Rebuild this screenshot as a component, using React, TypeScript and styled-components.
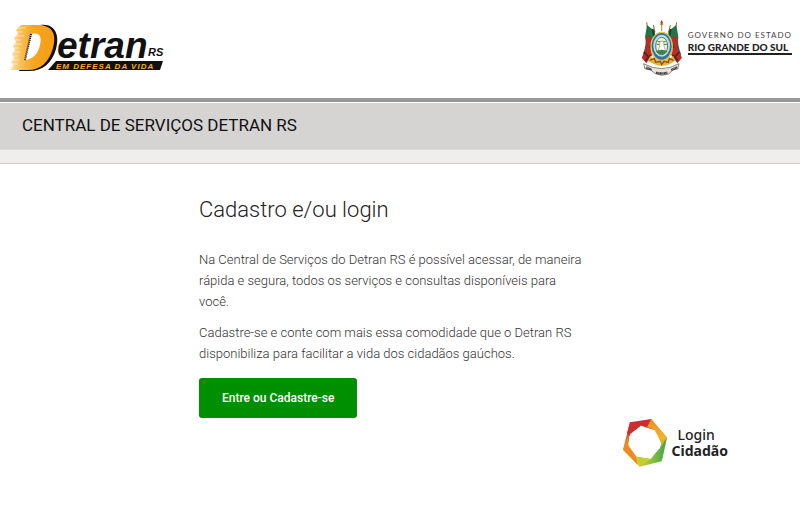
import React from "react";
import styled, { createGlobalStyle } from "styled-components";

const GlobalStyle = createGlobalStyle`
  *, *::before, *::after { box-sizing: border-box; }
  body {
    margin: 0;
    background: #fff;
    font-family: Roboto, "Liberation Sans", sans-serif;
  }
  h1, h2, p { margin: 0; }
`;

const Header = styled.header`
  display: flex;
  justify-content: space-between;
  align-items: flex-start;
  padding: 19px 8px 21px;
  border-bottom: 4px solid #999898;
`;

const HomeLink = styled.a`
  display: block;
  padding-top: 3px;
  text-decoration: none;
`;

const Drawing = styled.svg`
  display: block;
  overflow: visible;
`;

const State = styled.div`
  display: flex;
  gap: 4px;
`;

const StateName = styled.div`
  margin-top: 11px;
  align-self: flex-start;
  border-bottom: 2px solid #222;
  color: #222;
  font-family: Lato, sans-serif;
  white-space: nowrap;
`;

const StateTop = styled.div`
  font-size: 8px;
  line-height: 11px;
  letter-spacing: 1px;
  color: #444;
`;

const StateBottom = styled.div`
  font-size: 10px;
  line-height: 12px;
  font-weight: 900;
`;

const TitleBar = styled.div`
  margin-top: 1px;
  padding: 11px 22px 12px;
  background: #d5d4d2;
`;

const SiteTitle = styled.h1`
  font-size: 17px;
  line-height: 23px;
  font-weight: 400;
  color: #111;
`;

const Strip = styled.div`
  height: 15px;
  background: #efeeec;
  border-top: 1px solid #dddcda;
  border-bottom: 1px solid #d2d1cf;
`;

const Content = styled.main`
  max-width: 402px;
  margin: 0 auto;
  padding-top: 31px;
`;

const Heading = styled.h2`
  font-size: 22px;
  line-height: 30px;
  font-weight: 300;
  color: #222;
  margin-bottom: 24px;
`;

const Paragraph = styled.p`
  max-width: 386px;
  font-size: 13px;
  line-height: 21px;
  font-weight: 300;
  color: #333;
  margin-bottom: 10px;
`;

const EnterButton = styled.button`
  margin-top: 4px;
  padding: 0 23px;
  height: 40px;
  border: 0;
  border-radius: 3px;
  background: #008f00;
  color: #fff;
  font-family: inherit;
  font-size: 12px;
  font-weight: 500;
  cursor: pointer;
`;

const Footer = styled.footer`
  display: flex;
  justify-content: flex-end;
  padding: 0 72px 24px 0;
`;

const LoginBrand = styled.a`
  display: flex;
  align-items: center;
  gap: 4px;
  color: #222;
  text-decoration: none;
  font-family: "Noto Sans", sans-serif;
`;

const LoginWords = styled.span`
  display: grid;
  font-size: 14px;
  line-height: 16px;
  font-weight: 500;
`;

const FirstWord = styled.span`
  padding-left: 6px;
`;

const SecondWord = styled.strong`
  font-weight: 700;
`;

function DetranLogo() {
  return (
    <Drawing width="157" height="50" viewBox="8 22 157 50" role="img" aria-label="Detran RS">
      <defs>
        <linearGradient id="amber" gradientUnits="userSpaceOnUse" x1="10" x2="56" y1="0" y2="0">
          <stop offset="0" stopColor="#fde3b0" />
          <stop offset=".25" stopColor="#fabd50" />
          <stop offset=".5" stopColor="#f7a61f" />
          <stop offset="1" stopColor="#f59c14" />
        </linearGradient>
      </defs>
      <path d="M40 25 C55 23 60 35 56 49 C52 63 43 71 29 71 H19 L20 69 H29 C42 68 49 59 52 48 C55 35 50 27 40 25Z" fill="#111" />
      <path
        d="M21 25H38C52 25 57 34 53 48C49 62 41 70 28 70H10L13 66L11 62L14 58L12 54L15 50L13 46L16 42L14 38L18 34L16 30Z"
        fill="url(#amber)"
      />
      <path d="M32 34C40 32 42 38 40 45C38 54 33 59 25 60Z" fill="#fff" />
      <path d="M31 34 25 60" stroke="#111" strokeWidth="2" strokeDasharray="1 1" />
      <path d="M14 28h12M13 32h10M12 36h12M11 40h10M11 44h11M10 48h9M10 52h10M9 56h9M9 60h10M9 64h9" stroke="#fff" strokeWidth="1" opacity=".55" />
      <path d="M56 61H163L160 70H48Z" fill="#111" />
      <text x="57" y="58" fontFamily="Liberation Sans, sans-serif" fontSize="37" fontWeight="700" fontStyle="italic" fill="#111">etran</text>
      <text x="148" y="56" fontFamily="Liberation Sans, sans-serif" fontSize="11" fontWeight="700" fontStyle="italic" fill="#111">RS</text>
      <text x="56" y="69" fontFamily="Liberation Sans, sans-serif" fontSize="8" fontWeight="700" fontStyle="italic" letterSpacing="1" fill="#f9ad2a">EM DEFESA DA VIDA</text>
    </Drawing>
  );
}

function StateCrest() {
  return (
    <Drawing width="43" height="58" viewBox="39 24 129 174" aria-hidden="true">
      <path d="M101 30V60M96 40H106" stroke="#b98d2e" strokeWidth="3" />
      <path d="M101 27l4 8-4 6-4-6z" fill="#b33a2a" />
      <path d="M56 34 60 62M146 34 141 62M76 42l5 22M127 42l-5 22" stroke="#8a6a2c" strokeWidth="3" />
      <path d="M57 42 81 61 80 92 53 140 44 132Q57 98 51 78Z" fill="#247545" />
      <path d="M145 42 121 61 122 92 149 140 160 132Q147 98 151 78Z" fill="#247545" />
      <path d="M59 72 81 92 77 125 55 157 41 140Q58 113 54 91Z" fill="#bd282b" />
      <path d="M143 72 121 92 125 125 148 157 162 140Q144 113 149 91Z" fill="#bd282b" />
      <path d="M74 54 79 81 66 111M128 54 123 81 136 111" stroke="#213f2c" strokeWidth="6" fill="none" />
      <path d="M51 150 68 132M150 150 134 132M48 123 66 143M154 123 136 143" stroke="#52231d" strokeWidth="5" />
      <ellipse cx="101" cy="107" rx="34" ry="45" fill="#e5c545" />
      <ellipse cx="101" cy="106" rx="30" ry="40" fill="#2f72a8" />
      <ellipse cx="101" cy="104" rx="25" ry="33" fill="#b9dde9" />
      <ellipse cx="101" cy="105" rx="18" ry="26" fill="#ecf3d9" stroke="#547c63" strokeWidth="3" />
      <path d="M89 92h24M86 100h10M108 100h10" stroke="#487a54" strokeWidth="3" />
      <path d="M96 91h10l3 18 4 11H89l5-11z" fill="#fff" stroke="#8b9b66" strokeWidth="2" />
      <path d="M84 121q17-9 34 0-6 10-17 10t-17-10z" fill="#418346" />
      <path d="M66 135q35 29 70 0l6 14q-41 30-82 0z" fill="#e3b534" />
      <path d="M65 148l14-6 4 12 14-3 4 10 7-10 13 3 3-12 13 6" stroke="#8e4d25" strokeWidth="4" fill="none" />
      <path d="M47 158Q101 188 153 158L149 174 136 176 122 189 101 193 82 188 67 176 51 174Z" fill="#e8e4da" stroke="#55514b" strokeWidth="2" />
      <path d="M55 169l16 8M84 185q17 5 34 0M130 177l17-8" stroke="#303030" strokeWidth="7" strokeDasharray="3 1" fill="none" />
    </Drawing>
  );
}

function LoginMark() {
  return (
    <Drawing width="46" height="50" viewBox="15 17 138 150" aria-hidden="true">
      <defs>
        <linearGradient id="leftSide" x1="0" y1="0" x2="0" y2="1">
          <stop offset="0" stopColor="#c62d30" />
          <stop offset="1" stopColor="#ef8a25" />
        </linearGradient>
        <linearGradient id="rightSide" x1="0" y1="0" x2="0" y2="1">
          <stop offset="0" stopColor="#f08a22" />
          <stop offset=".45" stopColor="#f0b626" />
          <stop offset="1" stopColor="#55ab46" />
        </linearGradient>
        <linearGradient id="base" x1="0" x2="1">
          <stop offset="0" stopColor="#f2ce2b" />
          <stop offset=".5" stopColor="#8dc03f" />
          <stop offset="1" stopColor="#3ba548" />
        </linearGradient>
      </defs>
      <path d="M39 30 72 40 38 66 34 100 18 112Z" fill="url(#leftSide)" />
      <path d="M39 30 103 20 119 65 72 40 38 72 30 62Z" fill="#c9302f" />
      <path d="M103 20 150 75 134 147 128 112 132 92 114 53 90 44Z" fill="url(#rightSide)" />
      <path d="M150 75 134 147 68 163 56 132 99 139 130 106Z" fill="url(#base)" />
      <path d="M68 163 18 112 34 92 57 132Z" fill="#f2be2a" />
      <path d="M18 112 33 72 36 105 57 132 62 157Z" fill="#ed8a28" />
      <path d="M68 163 56 132 102 139Z" fill="#c5ce31" />
      <path d="M72 40 114 54 132 98 102 139 58 132 34 98 39 66Z" fill="#fff" />
    </Drawing>
  );
}

export default function App() {
  return (
    <>
      <GlobalStyle />
      <Header>
        <HomeLink href="#">
          <DetranLogo />
        </HomeLink>
        <State>
          <StateCrest />
          <StateName>
            <StateTop>GOVERNO DO ESTADO</StateTop>
            <StateBottom>RIO GRANDE DO SUL</StateBottom>
          </StateName>
        </State>
      </Header>
      <TitleBar>
        <SiteTitle>CENTRAL DE SERVIÇOS DETRAN RS</SiteTitle>
      </TitleBar>
      <Strip />
      <Content>
        <Heading>Cadastro e/ou login</Heading>
        <Paragraph>
          Na Central de Serviços do Detran RS é possível acessar, de maneira rápida e segura, todos os
          serviços e consultas disponíveis para você.
        </Paragraph>
        <Paragraph>
          Cadastre-se e conte com mais essa comodidade que o Detran RS disponibiliza para facilitar a vida
          dos cidadãos gaúchos.
        </Paragraph>
        <EnterButton type="button">Entre ou Cadastre-se</EnterButton>
      </Content>
      <Footer>
        <LoginBrand href="#">
          <LoginMark />
          <LoginWords>
            <FirstWord>Login</FirstWord>
            <SecondWord>Cidadão</SecondWord>
          </LoginWords>
        </LoginBrand>
      </Footer>
    </>
  );
}
